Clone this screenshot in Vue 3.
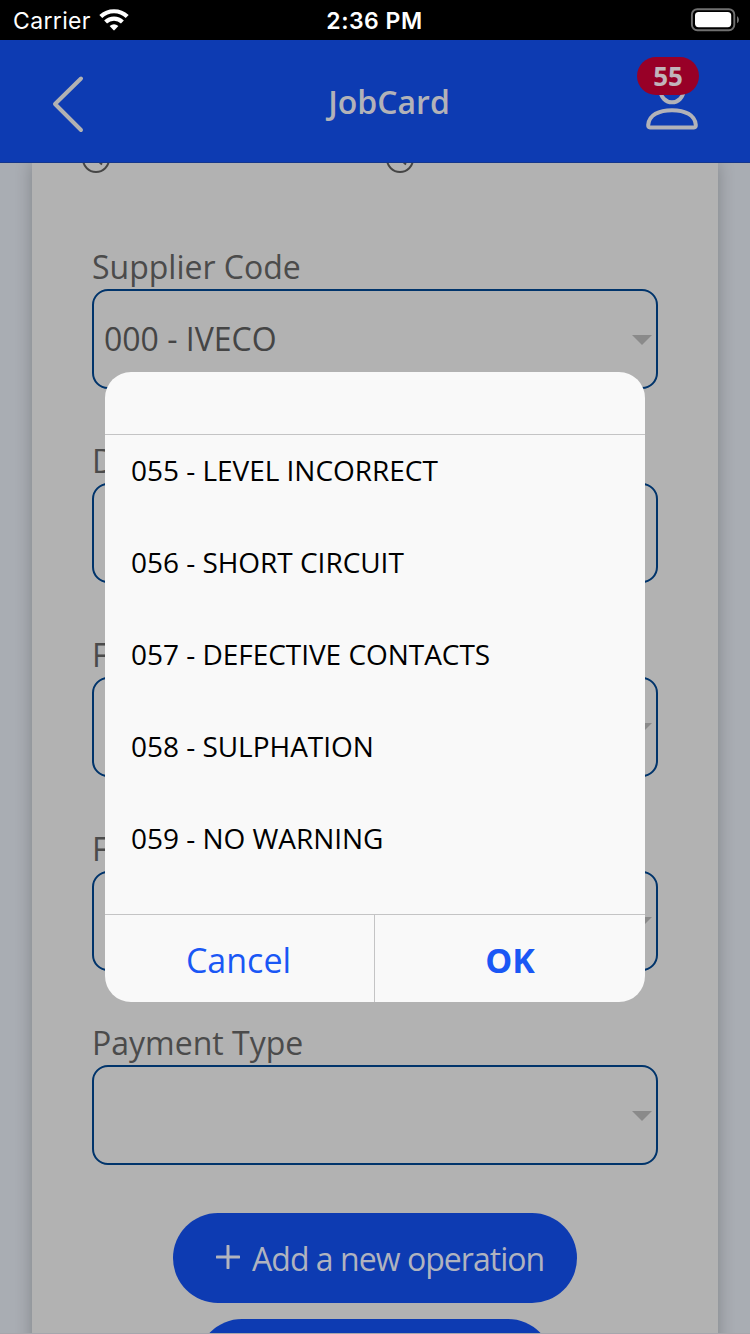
<script setup>
const fields = [
  { label: 'Supplier Code', value: '000 - IVECO', arrow: true },
  { label: 'D', value: '', arrow: false },
  { label: 'F', value: '', arrow: true },
  { label: 'F', value: '', arrow: true },
  { label: 'Payment Type', value: '', arrow: true },
]
const options = [
  '055 - LEVEL INCORRECT',
  '056 - SHORT CIRCUIT',
  '057 - DEFECTIVE CONTACTS',
  '058 - SULPHATION',
  '059 - NO WARNING',
]
</script>

<template>
  <div class="screen">
    <div class="status">
      <div class="carrier">
        <span>Carrier</span>
        <svg class="wifi" width="30" height="22" viewBox="0 0 30 22">
          <path d="M1.800 7.600 A19 19 0 0 1 28.200 7.600" />
          <path d="M6.600 12.900 A12.200 12.200 0 0 1 23.400 12.900" />
          <path class="dot" d="M10.600 17 Q15 13.600 19.400 17 L15.600 21.100 Q15 21.700 14.400 21.100 Z" />
        </svg>
      </div>
      <span class="time">2:36 PM</span>
      <svg class="battery" width="50" height="24" viewBox="0 0 50 24">
        <rect x="1.9" y="1.2" width="42.4" height="21" rx="5.4" fill="none" stroke="#707070" stroke-width="1.9" />
        <rect x="5" y="4" width="36.2" height="15.2" rx="3.6" fill="#fff" />
        <path d="M47 8 Q49 9.5 49 11.7 Q49 14 47 15.3 Z" fill="#707070" />
      </svg>
    </div>

    <header class="header">
      <svg class="back" width="36" height="62" viewBox="0 0 36 62">
        <path d="M31 5.500 L5 31 L31 57" />
      </svg>
      <h1 class="title">JobCard</h1>
      <div class="profile">
        <svg width="56" height="56" viewBox="0 0 56 56">
          <circle cx="28" cy="17" r="11.300" />
          <path d="M6 53.500 Q4 53.500 4.200 51 C5 41 15 36.200 28 36.200 C41 36.200 51 41 51.800 51 Q52 53.500 50 53.500 Z" />
        </svg>
        <span class="badge">55</span>
      </div>
    </header>

    <main class="content">
      <section class="card">
        <div class="clocks">
          <svg v-for="n in 2" :key="n" width="28" height="28" viewBox="0 0 28 28">
            <circle cx="14" cy="14" r="13" />
            <path d="M14 5 V14 L20 19.500" />
          </svg>
        </div>
        <div v-for="(f, i) in fields" :key="i" class="field">
          <label class="label">{{ f.label }}</label>
          <div class="select">
            <span class="value">{{ f.value }}</span>
            <i v-if="f.arrow" class="arrow"></i>
          </div>
        </div>
        <button class="action">
          <svg width="24" height="24" viewBox="0 0 24 24"><path d="M12 1 V23 M1 12 H23" /></svg>
          <span>Add a new operation</span>
        </button>
        <div class="action second"></div>
      </section>
    </main>

    <div class="dialog">
      <div class="dialog-head"></div>
      <ul class="options">
        <li v-for="o in options" :key="o"><span>{{ o }}</span></li>
      </ul>
      <div class="buttons">
        <button>Cancel</button>
        <button class="ok">OK</button>
      </div>
    </div>
  </div>
</template>

<style>
body { overflow: hidden; }
</style>

<style scoped>
* { box-sizing: border-box; }
.screen {
  position: relative;
  display: flex;
  flex-direction: column;
  width: 750px;
  height: 1334px;
  overflow: hidden;
  background: #a9adb3;
  font-family: "Open Sans", "Noto Sans", sans-serif;
}
.status {
  display: grid;
  grid-template-columns: 1fr auto 1fr;
  align-items: center;
  flex: none;
  height: 40px;
  padding: 0 10px 0 13px;
  background: #000;
  color: #fff;
  font-family: Inter, sans-serif;
  font-size: 23px;
}
.carrier { display: flex; align-items: center; gap: 8px; letter-spacing: 0.35px; }
.carrier span, .time { padding-top: 2px; }
.wifi path { fill: none; stroke: #fff; stroke-width: 4.2; }
.wifi .dot { fill: #fff; stroke: none; }
.time { font-weight: 600; font-size: 23px; letter-spacing: 0.5px; margin: 0 4px 0 0; }
.battery { justify-self: end; }
.header {
  display: grid;
  grid-template-columns: 150px 1fr 150px;
  flex: none;
  height: 123px;
  background: #0d3bb2;
  border-bottom: 1px solid #14368c;
  z-index: 1;
}
.back { margin: 33px 0 0 50px; fill: none; stroke: #b2b2b2; stroke-width: 4; stroke-linecap: round; stroke-linejoin: round; }
.title {
  margin: 0;
  padding-left: 28px;
  text-align: center;
  line-height: 124px;
  font-size: 32px;
  font-weight: 600;
  color: #b2b2b8;
}
.profile { position: relative; padding: 34px 0 0 44px; }
.profile svg { fill: none; stroke: #b2b2b8; stroke-width: 4; display: block; }
.badge {
  position: absolute;
  left: 37px;
  top: 17px;
  width: 62px;
  height: 38px;
  border-radius: 19px;
  background: #980027;
  color: #c1b5bb;
  font-size: 26px;
  font-weight: 700;
  line-height: 38px;
  text-align: center;
}
.content { flex: 1; min-height: 0; padding: 0 32px; overflow: hidden; border-bottom: 1px solid #a6a6ac; }
.card {
  height: 1300px;
  padding: 0 60px;
  background: #b2b2b2;
  box-shadow: 0 0 16px rgba(0, 0, 0, 0.24);
}
.clocks { display: flex; gap: 276px; height: 82px; margin-left: -10px; }
.clocks svg { margin-top: -18px; fill: none; stroke: #454545; stroke-width: 2; flex: none; }
.field { height: 194px; }
.label { display: block; height: 44px; line-height: 44px; font-size: 32px; color: #4b4b4b; }
.select {
  display: flex;
  align-items: center;
  justify-content: space-between;
  height: 100px;
  padding: 0 4px 0 10px;
  border: 2px solid #00346b;
  border-radius: 16px;
  font-size: 32px;
  color: #454545;
}
.value { padding-bottom: 2px; }
.arrow { margin-top: 2px; border: 10px solid transparent; border-top-color: #8a8a8a; border-bottom: 0; }
.action {
  display: flex;
  align-items: center;
  width: 404px;
  height: 90px;
  margin: -2px auto 0;
  padding: 0 0 0 43px;
  gap: 12px;
  border: 0;
  border-radius: 45px;
  background: #0d3bb2;
  color: #b0b3bf;
  font-family: inherit;
  font-size: 32px;
  letter-spacing: -0.96px;
  white-space: nowrap;
}
.action svg { flex: none; margin-bottom: 2px; stroke: #b2b4bd; stroke-width: 3; stroke-linecap: round; }
.second { width: 356px; margin-top: 16px; }
.dialog {
  position: absolute;
  left: 105px;
  top: 372px;
  width: 540px;
  height: 630px;
  display: flex;
  flex-direction: column;
  overflow: hidden;
  border-radius: 26px;
  background: #f9f9f9;
  z-index: 2;
}
.dialog-head { height: 63px; border-bottom: 1px solid #c4c4c5; }
.options { flex: 1; margin: 0; padding: 0 26px; list-style: none; font-size: 28px; letter-spacing: -0.03px; color: #000; }
.options li { height: 92px; line-height: 70px; white-space: nowrap; }
.buttons { display: grid; grid-template-columns: 1fr 1fr; height: 88px; border-top: 1px solid #c4c4c5; }
.buttons button {
  padding: 2px 2px 0 0;
  border: 0;
  border-right: 1px solid #c4c4c5;
  background: none;
  color: #1a57f5;
  font-family: inherit;
  font-size: 34px;
}
.buttons .ok { border-right: 0; padding-right: 0; font-weight: 700; }
</style>
